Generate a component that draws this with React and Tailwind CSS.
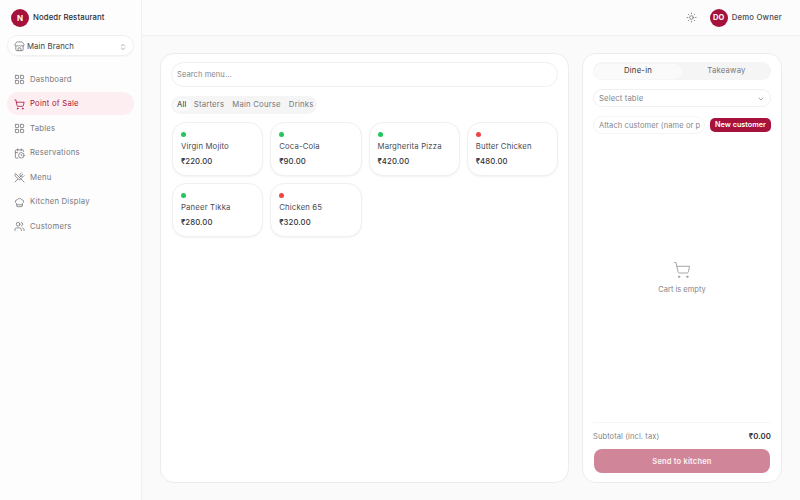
import { CalendarClock, ChefHat, ChevronDown, ChevronsUpDown, LayoutGrid, ShoppingCart, Store, Sun, Users, UtensilsCrossed } from 'lucide-react';

const navItems = [
  { label: 'Dashboard', icon: LayoutGrid },
  { label: 'Point of Sale', icon: ShoppingCart, active: true },
  { label: 'Tables', icon: LayoutGrid },
  { label: 'Reservations', icon: CalendarClock },
  { label: 'Menu', icon: UtensilsCrossed },
  { label: 'Kitchen Display', icon: ChefHat },
  { label: 'Customers', icon: Users },
];

const menuItems = [
  { name: 'Virgin Mojito', price: '₹220.00', veg: true },
  { name: 'Coca-Cola', price: '₹90.00', veg: true },
  { name: 'Margherita Pizza', price: '₹420.00', veg: true },
  { name: 'Butter Chicken', price: '₹480.00', veg: false },
  { name: 'Paneer Tikka', price: '₹280.00', veg: true },
  { name: 'Chicken 65', price: '₹320.00', veg: false },
];

const Sidebar = () => (
  <aside className="w-[142px] shrink-0 border-r border-[#f0f0f0] bg-[#fdfdfd] px-[7px]">
    <div className="flex h-[35px] items-center gap-[4px] pl-[4px]">
      <div className="flex h-[18px] w-[18px] items-center justify-center rounded-full bg-[#a6123c] text-[8px] font-bold text-white">N</div>
      <span className="text-[7.75px] font-medium tracking-[0.1px] text-[#2e2e33]">Nodedr Restaurant</span>
    </div>
    <div className="flex h-[21px] items-center rounded-full border border-[#f0f0f0] bg-white pl-[6px] pr-[6px] pt-[2px] shadow-[0_1px_1px_rgba(0,0,0,0.03)]">
      <Store size={11} strokeWidth={1.75} className="text-[#77777c]" />
      <span className="ml-[2px] flex-1 text-[7.75px] font-normal tracking-[0.1px] text-[#3a3a40]">Main Branch</span>
      <ChevronsUpDown size={8} className="text-[#8a8a8f]" />
    </div>
    <nav className="mt-[11.25px] flex flex-col gap-[1px]">
      {navItems.map(({ label, icon: Icon, active }) => (
        <div
          key={label}
          className={`flex h-[23.5px] items-center gap-[5.5px] rounded-full pl-[6.5px] pt-[1px] text-[7.75px] font-normal tracking-[0.2px] ${
            active ? 'bg-[#fdeff1] text-[#a6123c]' : 'text-[#77777c]'
          }`}
        >
          <Icon size={11} strokeWidth={1.75} />
          {label}
        </div>
      ))}
    </nav>
  </aside>
);

const Header = () => (
  <header className="flex h-[36px] shrink-0 items-center justify-end border-b border-[#f0f0f0] bg-[#fcfcfc] pr-[18px]">
    <Sun size={11} strokeWidth={1.5} className="text-[#66666b]" />
    <div className="ml-[13px] flex h-[18px] w-[18px] items-center justify-center rounded-full bg-[#a6123c] text-[7.5px] font-bold text-white">DO</div>
    <span className="ml-[4px] text-[7.75px] font-medium tracking-[0.2px] text-[#4a4a50]">Demo Owner</span>
  </header>
);

const MenuCard = ({ item }) => (
  <div className="h-[54px] rounded-[14px] border border-[#f0f0f0] bg-white pl-[8px] pt-[9px] shadow-[0_1px_2px_rgba(0,0,0,0.05)]">
    <div className={`h-[5px] w-[5px] rounded-full ${item.veg ? 'bg-[#22c55e]' : 'bg-[#ef4444]'}`} />
    <div className="mt-[3px] text-[7.75px] font-normal leading-[13px] tracking-[0.15px] text-[#4a4a50]">{item.name}</div>
    <div className="mt-[2px] text-[7.75px] font-medium leading-[13px] tracking-[0.1px] text-[#333338]">{item.price}</div>
  </div>
);

const MenuPanel = () => (
  <section className="flex-1 rounded-[14px] border border-[#ececec] bg-white px-[10px] pt-[8px]">
    <div className="flex h-[25px] items-center rounded-full border border-[#f0f0f0] bg-white pl-[5px] text-[7.5px] tracking-[0.1px] text-[#85858a]">Search menu...</div>
    <div className="mt-[9px] flex h-[18px] w-[146px] items-center whitespace-nowrap rounded-full bg-[#f5f5f5] pl-[2px] text-[7.75px] font-normal tracking-[0.2px] text-[#77777c]">
      <span className="rounded-full bg-[#fafafa] px-[4px] text-[#333338]">All</span>
      <span className="ml-[3px]">Starters</span>
      <span className="ml-[8px]">Main Course</span>
      <span className="ml-[8px]">Drinks</span>
    </div>
    <div className="mt-[8px] grid grid-cols-4 gap-x-[7px] gap-y-[7px] pl-[1px]">
      {menuItems.map((item) => (
        <MenuCard key={item.name} item={item} />
      ))}
    </div>
  </section>
);

const CartPanel = () => (
  <section className="flex w-[200px] shrink-0 flex-col rounded-[14px] border border-[#ececec] bg-white px-[10px] pb-[9px] pt-[8px]">
    <div className="flex h-[18px] items-center rounded-full bg-[#f5f5f5] text-[7.75px] font-normal tracking-[0.2px]">
      <div className="ml-[1px] flex h-[15px] w-[88px] items-center justify-center rounded-full bg-[#fafafa] text-[#333338]">Dine-in</div>
      <div className="flex-1 text-center text-[#77777c]">Takeaway</div>
    </div>
    <div className="mt-[9px] flex h-[18px] items-center justify-between rounded-full border border-[#f0f0f0] px-[5px] pt-[1px] text-[7.75px] tracking-[0.1px] text-[#85858a]">
      Select table
      <ChevronDown size={8} className="text-[#77777c]" />
    </div>
    <div className="mt-[9px] flex h-[18px] items-center gap-[5px]">
      <div className="flex h-[18px] w-[112px] items-center whitespace-nowrap rounded-full border border-[#f5f5f5] pl-[5px] pt-[1px] text-[7.5px] tracking-[0.1px] text-[#85858a]">Attach customer (name or p</div>
      <button className="flex h-[14px] flex-1 items-center justify-center rounded-[5px] bg-[#a6123c] text-[7.25px] font-semibold text-white">New customer</button>
    </div>
    <div className="flex flex-1 flex-col items-center justify-center">
      <ShoppingCart size={18} strokeWidth={1} className="text-[#8a8a8f]" />
      <span className="mt-[5px] text-[7.5px] text-[#85858a]">Cart is empty</span>
    </div>
    <div className="flex h-[27px] items-center justify-between border-t border-[#f5f5f5] pt-[1px] text-[7.5px] tracking-[0.1px]">
      <span className="text-[#85858a]">Subtotal (incl. tax)</span>
      <span className="text-[7.75px] font-semibold text-[#2e2e33]">₹0.00</span>
    </div>
    <button className="mx-[1px] h-[24px] rounded-[8px] bg-[#d08599] pt-[1px] text-[7.5px] font-semibold tracking-[0.2px] text-[#fdf2f4]">Send to kitchen</button>
  </section>
);

export default function App() {
  return (
    <div className="flex h-[500px] w-[800px] overflow-hidden bg-[#fafafa] font-['Inter',sans-serif]">
      <Sidebar />
      <div className="flex flex-1 flex-col">
        <Header />
        <main className="flex flex-1 gap-[13px] pb-[17px] pl-[18px] pr-[18px] pt-[17px]">
          <MenuPanel />
          <CartPanel />
        </main>
      </div>
    </div>
  );
}
